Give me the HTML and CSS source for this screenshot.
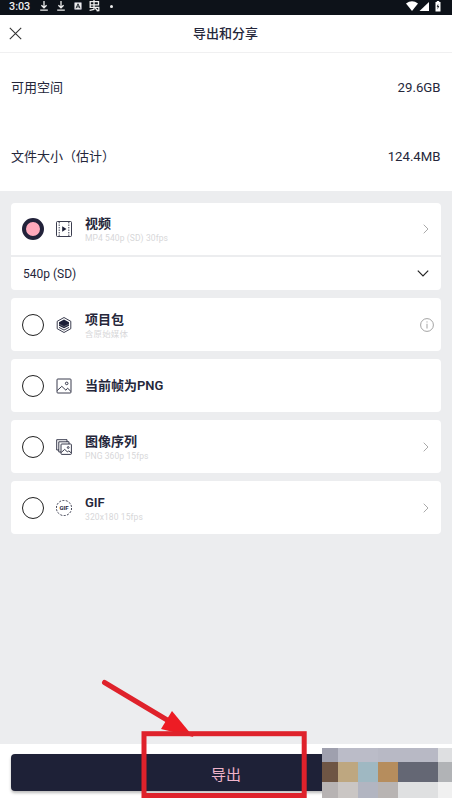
FILE: index.html
```html
<!DOCTYPE html>
<html lang="zh-CN">
<head>
<meta charset="utf-8">
<title>导出和分享</title>
<link rel="stylesheet" href="styles.css">
</head>
<body>
<div class="screen">
  <div class="status">
    <span class="clock">3:03</span>
    <svg class="dl" width="8" height="10" viewBox="0 0 8 10"><path d="M4 0v6.5M1.4 4.2 4 6.8l2.6-2.6M.2 9.2h7.6"/></svg>
    <svg class="dl dl2" width="8" height="10" viewBox="0 0 8 10"><path d="M4 0v6.5M1.4 4.2 4 6.8l2.6-2.6M.2 9.2h7.6"/></svg>
    <svg class="letter" width="8" height="8" viewBox="0 0 8 8"><rect width="8" height="8" rx="1" fill="#eee"/><path d="M2 6.3 4 1.8l2 4.5M2.8 4.9h2.4" fill="none" stroke="#222830"/></svg>
    <svg class="bug" width="11" height="12" viewBox="0 0 11 12"><path d="M1.2 4.8V1.6h8.3v3.2H1.2M5 0v9.8M.6 10.4 5 9.4M1.2 4.8v2.5h8.6v3.4H7.4M6.2 8.2l3.2 3"/></svg>
    <i class="dot"></i>
    <svg class="signals" width="36" height="11" viewBox="0 0 36 11"><path d="M0 2.5Q6-1.8 12 2.5L6 10Z"/><path d="M23 1v9h-9.5Z"/><path fill-rule="evenodd" d="M29.5 1h1.3V0h2.4v1h1.3v9.6h-5ZM32.2 2.8l-1.5 3h1l-.2 2.6 1.7-3.3h-1Z"/></svg>
  </div>
  <header class="header">
    <svg class="close" width="13" height="13" viewBox="0 0 13 13"><path d="m.8.8 11.4 11.4M12.2.8.8 12.2"/></svg>
    <h1>导出和分享</h1>
  </header>
  <section class="info">
    <div class="info-row"><span class="label">可用空间</span><span>29.6GB</span></div>
    <div class="info-row"><span class="label">文件大小（估计）</span><span>124.4MB</span></div>
  </section>
  <main class="options">
    <div class="card">
      <div class="option first">
        <span class="radio selected"></span>
        <svg class="icon" viewBox="0 0 16 16"><rect x=".5" y=".5" width="15" height="15" rx="1"/><path d="M3.2 1v14M12.8 1v14" stroke-dasharray="1.4 1.1"/><path class="fill" d="m6.2 5.3 4.3 2.7-4.3 2.7Z"/></svg>
        <div class="text"><b>视频</b><small>MP4 540p (SD) 30fps</small></div>
        <svg class="chev" viewBox="0 0 6 10"><path d="m.7.7 4.3 4.3L.7 9.3"/></svg>
      </div>
      <div class="quality"><span>540p (SD)</span><svg width="12" height="7" viewBox="0 0 12 7"><path d="m.8.7 5.2 5.2L11.2.7"/></svg></div>
    </div>
    <div class="card option">
      <span class="radio"></span>
      <svg class="icon" viewBox="0 0 16 16"><path d="m8 .5 6.8 3.8v7.4L8 15.5l-6.8-3.8V4.3Z"/><path class="fill" d="m8 2.5 5 2.7v3.5l-5 2.6-5-2.6V5.2Z"/><path class="gap" d="m3 7.1 5 2.5 5-2.5"/><path d="m3 10.4 5 2.7 5-2.7"/></svg>
      <div class="text"><b>项目包</b><small>含原始媒体</small></div>
      <svg class="about" viewBox="0 0 14 14"><circle cx="7" cy="7" r="6.4"/><path d="M7 5.8v4.7M7 3.4v1.1"/></svg>
    </div>
    <div class="card option">
      <span class="radio"></span>
      <svg class="icon" viewBox="0 0 16 16"><rect x="1" y="1" width="14" height="14" rx=".8"/><circle cx="10.7" cy="5.4" r="1.3"/><path d="m1.2 12.6 4.6-4.3 4.1 3.9 1.7-2 3.2 3.1"/></svg>
      <div class="text"><b>当前帧为PNG</b></div>
    </div>
    <div class="card option">
      <span class="radio"></span>
      <svg class="icon" viewBox="0 0 16 16"><path d="M3 11H.7V.7H11V3M5 13H2.8V2.8H13V5"/><rect x="5" y="5" width="10.4" height="10.4" rx=".8"/><circle cx="12.2" cy="8.5" r=".9"/><path d="m5.3 13.4 3.4-3 2.8 2.6 1.1-1.2 2.5 2"/></svg>
      <div class="text"><b>图像序列</b><small>PNG 360p 15fps</small></div>
      <svg class="chev" viewBox="0 0 6 10"><path d="m.7.7 4.3 4.3L.7 9.3"/></svg>
    </div>
    <div class="card option">
      <span class="radio"></span>
      <svg class="icon" viewBox="0 0 16 16"><circle cx="8" cy="8" r="7.6" stroke-dasharray="2 1.4"/><text x="8" y="10.1" text-anchor="middle">GIF</text></svg>
      <div class="text"><b>GIF</b><small>320x180 15fps</small></div>
      <svg class="chev" viewBox="0 0 6 10"><path d="m.7.7 4.3 4.3L.7 9.3"/></svg>
    </div>
  </main>
  <footer class="footer"><button class="export">导出</button></footer>
  <div class="mosaic">
    <i class="m1"></i><i class="m2"></i><i class="m2"></i><i class="m3"></i><i class="m3"></i><i class="m3"></i><i class="m4"></i>
    <i class="m5"></i><i class="m6"></i><i class="m7"></i><i class="m8"></i><i class="m9"></i><i class="m9"></i><i class="m10"></i>
    <i class="m11"></i><i class="m12"></i><i class="m13"></i><i class="m14"></i><i class="m15"></i><i class="m15"></i><i class="m16"></i>
  </div>
  <svg class="callout" width="208" height="124" viewBox="0 0 208 124"><path d="M4.5 7.5 68 45.5" stroke-width="5" stroke-linecap="round"/><path class="head" d="m72 36 21.5 26L61 54Z"/><rect x="44" y="58.7" width="160.2" height="61.8" stroke-width="5"/></svg>
</div>
</body>
</html>
```
FILE: styles.css
```css
* { box-sizing: border-box; }
body { margin: 0; font-family: Roboto, "Noto Sans CJK SC", sans-serif; color: #25273b; }
svg { flex: none; fill: none; stroke: #25273b; }
.screen { position: relative; display: flex; flex-direction: column; width: 452px; height: 804px; overflow: hidden; background: #fff; }
.status { display: flex; align-items: center; height: 15px; padding: 0 10px 3px 9px; background: #0d1219; color: #eee; }
.clock { width: 31px; padding-top: 1px; font-size: 10.8px; font-weight: 500; line-height: 12px; }
.dl, .bug { stroke: #eee; stroke-width: 1.3; }
.dl2 { margin-left: 9px; }
.letter { margin-left: 9px; }
.bug { margin-left: 7px; }
.dot { width: 3px; height: 3px; margin-left: 10px; border-radius: 50%; background: #eee; }
.signals { margin-left: auto; fill: #fff; stroke: none; }
.header { display: grid; grid-template-columns: 13px 1fr 13px; align-items: center; height: 38px; padding: 0 10px 0 9px; border-bottom: 1px solid #f0f0f1; }
.close { stroke: #333; stroke-width: 1.1; }
h1 { margin: 0; text-align: center; font-size: 13px; font-weight: 500; line-height: 20px; }
.info-row { display: flex; align-items: center; justify-content: space-between; height: 69px; padding: 0 11.5px 0 11px; font-size: 13.2px; }
.label { padding-bottom: 2px; font-size: 13px; }
.options { display: flex; flex: 1; flex-direction: column; gap: 8px; padding: 12px 11px; background: #ecedef; }
.card { background: #fff; border-radius: 4px; }
.option { display: flex; align-items: center; height: 53px; padding: 0 12px 0 11px; }
.first { height: 52px; }
.radio { width: 22px; height: 22px; border: 1.3px solid #222; border-radius: 50%; }
.selected { border: 4px solid #22223a; background: #ffa9bc; }
.icon { width: 16px; height: 16px; margin: 0 13px 0 12px; stroke-width: .9; }
.icon .fill { fill: #1d2038; stroke: none; }
.icon .gap { stroke: #aaa; stroke-width: .5; }
.icon text { fill: #25273b; stroke: none; font-size: 6px; font-weight: 700; }
.text { display: flex; flex: 1; flex-direction: column; }
.text b { font-size: 13px; font-weight: 600; line-height: 19px; }
.text small { margin-top: -1px; font-size: 8.5px; line-height: 12px; letter-spacing: .1px; color: #d7d7d9; }
.chev { width: 6px; height: 10px; stroke: #aaa; }
.about { width: 14px; height: 14px; margin-right: -5px; stroke: #999; stroke-width: .9; }
.quality { display: flex; align-items: center; justify-content: space-between; height: 35px; padding: 0 12px; border-top: 2px solid #ecedef; font-size: 12px; }
.quality svg { stroke: #222; stroke-width: 1.2; }
.footer { height: 60px; padding: 10px 11px; }
.export { display: block; width: 100%; height: 37px; border: 0; border-radius: 4px; background: #1e2137; box-shadow: 0 2px 3px #0004; color: #efb4cb; font: 400 15px/37px Roboto, "Noto Sans CJK SC", sans-serif; padding: 3px 0 0; }
.mosaic { position: absolute; left: 322px; top: 748px; display: grid; grid-template-columns: 16px 20px 20px 20px 20px 20px 14px; grid-template-rows: 14px 20px 16px; }
.m1 { background: #9fa0ae; } .m2 { background: #bbbcc8; } .m3 { background: #b8b9c5; } .m4 { background: #dedfe1; }
.m5 { background: #6e5544; } .m6 { background: #bea780; } .m7 { background: #9fb8c2; } .m8 { background: #b68d5d; }
.m9 { background: #646774; } .m10 { background: #b1b3b6; } .m11 { background: #b7b3b3; } .m12 { background: #cac6c4; }
.m13 { background: #b2b5c1; } .m14 { background: #b8b4b3; } .m15 { background: #dfe0e1; } .m16 { background: #f0f0f0; }
.callout { position: absolute; left: 100px; top: 675px; stroke: #df222b; }
.callout .head { fill: #ed1c24; stroke: none; }
```
